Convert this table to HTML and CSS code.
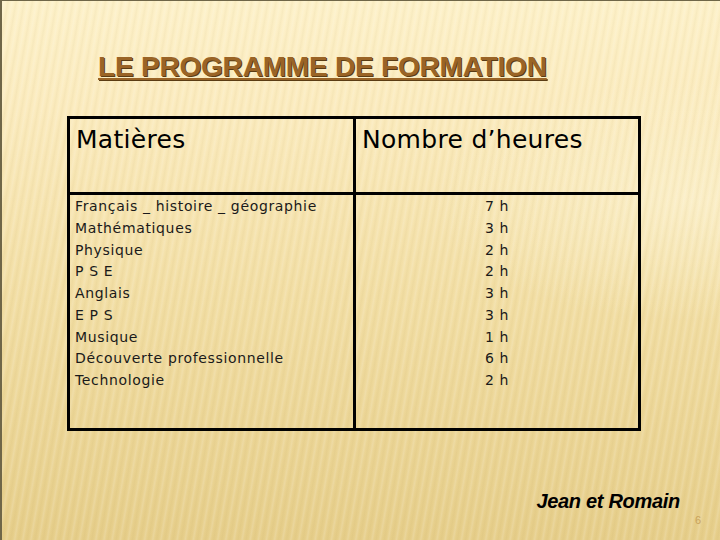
FILE: index.html
```
<!DOCTYPE html>
<html lang="fr">
<head>
<meta charset="utf-8">
<title>Le programme de formation</title>
<link rel="stylesheet" href="styles.css">
</head>
<body>
<div class="slide">
  <h1 class="title">LE PROGRAMME DE FORMATION</h1>
  <table class="prog">
    <thead>
      <tr>
        <th class="col-a">Matières</th>
        <th class="col-b">Nombre d’heures</th>
      </tr>
    </thead>
    <tbody>
      <tr>
        <td class="col-a">
          <div>Français _ histoire _ géographie</div>
          <div>Mathématiques</div>
          <div>Physique</div>
          <div>P S E</div>
          <div>Anglais</div>
          <div>E P S</div>
          <div>Musique</div>
          <div>Découverte professionnelle</div>
          <div>Technologie</div>
        </td>
        <td class="col-b hours">
          <div>7 h</div>
          <div>3 h</div>
          <div>2 h</div>
          <div>2 h</div>
          <div>3 h</div>
          <div>3 h</div>
          <div>1 h</div>
          <div>6 h</div>
          <div>2 h</div>
        </td>
      </tr>
    </tbody>
  </table>
  <div class="footer">
    <span class="authors">Jean et Romain</span>
  </div>
  <div class="pagenum">6</div>
</div>
</body>
</html>
```
FILE: styles.css
```
* { box-sizing: border-box; }
html, body { margin: 0; padding: 0; }
body { width: 720px; height: 540px; overflow: hidden; }

.slide {
  width: 720px;
  height: 540px;
  border-top: 1px solid #6f6648;
  border-left: 2px solid #6f6648;
  display: flex;
  flex-direction: column;
  align-items: flex-start;
  background:
    repeating-linear-gradient(100deg, rgba(255,255,255,0) 0px, rgba(255,255,255,0.14) 2px, rgba(255,255,255,0) 4px, rgba(170,140,60,0.06) 6px, rgba(255,255,255,0) 8px),
    radial-gradient(ellipse 260px 120px at 690px 200px, rgba(255,248,220,0.5), rgba(255,248,220,0)),
    linear-gradient(180deg, #fdf1c9 0%, #fbebbe 20%, #f2dea4 55%, #e6ce8a 100%);
}

.title {
  margin: 50px 0 0 96px;
  font-family: "Liberation Sans", Arial, sans-serif;
  font-weight: bold;
  font-size: 28px;
  line-height: 32px;
  letter-spacing: -0.2px;
  color: #9a6426;
  text-shadow: 1px 1px 0 #5a3c14;
  text-decoration: underline;
  text-decoration-thickness: 2px;
  text-underline-offset: 2px;
  text-decoration-color: #9a6426;
}

.prog {
  margin: 33px 0 0 65px;
  width: 574px;
  border: 3px solid #000;
  border-collapse: separate;
  border-spacing: 0;
  font-family: "DejaVu Sans", Verdana, sans-serif;
  color: #000;
}

.prog th {
  height: 76px;
  padding: 6px 6px 0 6px;
  text-align: left;
  vertical-align: top;
  font-weight: normal;
  font-size: 25px;
  line-height: 30px;
  letter-spacing: 0.3px;
  border-bottom: 3px solid #000;
}

.prog .col-a { width: 286px; border-right: 3px solid #000; }
.prog .col-b { width: 282px; }

.prog td {
  height: 233px;
  padding: 1px 5px 0 5px;
  vertical-align: top;
  font-size: 14px;
  line-height: 21.75px;
  letter-spacing: 0.65px;
  color: #1a1a1a;
}

.prog td.hours {
  text-align: center;
  padding-left: 0;
  padding-right: 0;
}

.footer {
  align-self: flex-end;
  margin: 58px 40px 0 0;
}

.authors {
  font-family: "Liberation Sans", Arial, sans-serif;
  font-weight: bold;
  font-style: italic;
  font-size: 20px;
  line-height: 24px;
  color: #000;
  letter-spacing: -0.3px;
}

.pagenum {
  align-self: flex-end;
  margin: 0 19px 0 0;
  font-family: "Liberation Sans", Arial, sans-serif;
  font-size: 11px;
  line-height: 14px;
  color: #c9a35c;
}
```
